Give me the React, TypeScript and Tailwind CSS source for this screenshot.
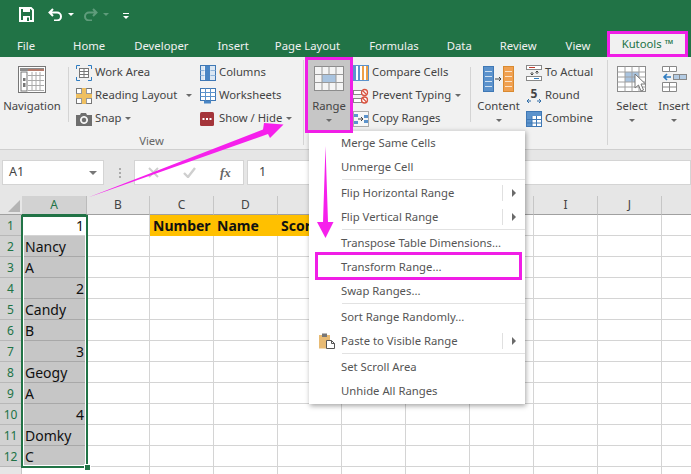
import React from "react";

const font = "font-['Noto_Sans','Open_Sans',sans-serif]";

const Caret = ({ className = "" }: { className?: string }) => (
  <span className={`inline-block h-0 w-0 border-x-[3px] border-t-[3px] border-x-transparent border-t-[#6a6a6a] ${className}`} />
);

const NavigationIcon = () => (
  <svg width="28" height="27" viewBox="0 0 28 27">
    <rect x="0.5" y="0.5" width="27" height="26" fill="#fff" stroke="#777" />
    <rect x="2" y="2" width="24" height="3" fill="#8c8c8c" />
    <line x1="10" y1="4" x2="26" y2="4" stroke="#d9694a" />
    <rect x="3" y="6" width="6" height="19" fill="#fff" stroke="#777" />
    <rect x="5" y="12" width="2.5" height="3" fill="#777" />
    <rect x="5" y="17" width="2.5" height="4" fill="#777" />
    {[10, 15, 20, 25].map((y) => <line key={y} x1="10" y1={y - 0.5} x2="26" y2={y - 0.5} stroke="#aaa" />)}
    {[14, 18, 22].map((x) => <line key={x} x1={x} y1="6" x2={x} y2="25" stroke="#aaa" />)}
  </svg>
);

const WorkAreaIcon = () => (
  <svg width="16" height="16" viewBox="0 0 16 16">
    <path d="M.5 4V.5H4M12 .5h3.500V4M15.500 12v3.500H12M4 15.500H.5V12" fill="none" stroke="#2f7cc1" />
    <rect x="3.500" y="3.500" width="9" height="9" fill="#fff" stroke="#777" />
    <path d="M3.500 6.500h9M3.500 9.500h9M8 3.500v9" stroke="#777" />
  </svg>
);

const ReadingIcon = () => (
  <svg width="16" height="16" viewBox="0 0 16 16">
    <rect x="0.5" y="0.5" width="15" height="15" fill="#fff" stroke="#777" />
    <path d="M.5 5.500h15M.5 10.500h15M5.500 .5v15M10.500 .5v15" stroke="#999" />
    <path d="M0 8h16M8 0v16" stroke="#f0c060" strokeWidth="4" />
  </svg>
);

const SnapIcon = () => (
  <svg width="16" height="14" viewBox="0 0 16 14">
    <path d="M0 3h4l1-2h5l1 2h5v11H0z" fill="#6e6e6e" />
    <circle cx="8" cy="8" r="3.500" fill="#e8e8e8" stroke="#fff" />
    <circle cx="8" cy="8" r="2.200" fill="#6e6e6e" />
  </svg>
);

const ColumnsIcon = () => (
  <svg width="16" height="16" viewBox="0 0 16 16">
    <rect x="0.5" y="0.5" width="15" height="15" fill="#fff" stroke="#3f78b5" />
    <rect x="1" y="1" width="3.500" height="14" fill="#dbe7f3" />
    <rect x="5" y="1" width="5" height="14" fill="#4a86c5" />
    <rect x="10" y="1" width="5" height="14" fill="#dbe7f3" />
    <path d="M10.500 5.500h5M10.500 10.500h5M.5 5.500h4M.5 10.500h4" stroke="#8fb4da" />
  </svg>
);

const WorksheetsIcon = () => (
  <svg width="16" height="16" viewBox="0 0 16 16">
    <rect x="0.5" y="0.5" width="15" height="12" fill="#fff" stroke="#3f78b5" />
    <path d="M.5 4.500h15M.5 8.500h15M5.500 .5v12M10.500 .5v12" stroke="#5c93cc" />
    <rect x="4" y="13" width="7" height="2.500" fill="#4a86c5" />
  </svg>
);

const ShowHideIcon = () => (
  <svg width="14" height="14" viewBox="0 0 14 14">
    <rect width="14" height="14" rx="1.500" fill="#a4343a" />
    <rect x="2.500" y="6" width="2" height="2" fill="#fff" />
    <rect x="6" y="6" width="2" height="2" fill="#fff" />
    <rect x="9.500" y="6" width="2" height="2" fill="#fff" />
  </svg>
);

const RangeIcon = () => (
  <svg width="30" height="25" viewBox="0 0 30 25">
    <rect x="0.5" y="0.5" width="29" height="24" fill="#f4f4f4" stroke="#8c8c8c" />
    <rect x="8" y="9" width="14" height="8" fill="#a9c4e0" />
    <path d="M.5 8.500h29M.5 16.500h29M8 .5v24M15 .5v8M15 17v7.500M22 .5v24" stroke="#9a9a9a" />
  </svg>
);

const CompareIcon = () => (
  <svg width="16" height="16" viewBox="0 0 16 16">
    <rect x="0.5" y="0.5" width="15" height="15" fill="#fff" stroke="#5c93cc" />
    <rect x="1" y="1" width="2" height="14" fill="#5c93cc" />
    <rect x="5" y="1" width="2" height="14" fill="#5c93cc" />
    <rect x="9" y="1" width="2" height="14" fill="#eea048" />
    <rect x="13" y="1" width="2" height="14" fill="#eea048" />
  </svg>
);

const PreventIcon = () => (
  <svg width="16" height="16" viewBox="0 0 16 16">
    <rect x="0.500" y="2.500" width="8" height="4" fill="#fff" stroke="#888" />
    <rect x="0.500" y="10.500" width="8" height="4" fill="#fff" stroke="#888" />
    <circle cx="11.500" cy="4.500" r="3" fill="#fff" stroke="#d9533f" strokeWidth="1.300" />
    <path d="M9.500 2.500l4 4" stroke="#d9533f" strokeWidth="1.300" />
    <circle cx="11.500" cy="12" r="3" fill="#fff" stroke="#d9533f" strokeWidth="1.300" />
    <path d="M9.500 10l4 4" stroke="#d9533f" strokeWidth="1.300" />
  </svg>
);

const CopyRangesIcon = () => (
  <svg width="16" height="16" viewBox="0 0 16 16">
    <rect x="0.5" y="0.5" width="15" height="15" fill="#f7f7f7" stroke="#aaa" />
    <rect x="1" y="3" width="4" height="3" fill="#5c93cc" />
    <rect x="1" y="10" width="4" height="3" fill="#5c93cc" />
    <rect x="11" y="4" width="4" height="3" fill="#5c93cc" />
    <rect x="11" y="9" width="4" height="3" fill="#5c93cc" />
    <path d="M5 8h5M8 6l2 2-2 2" fill="none" stroke="#444" />
  </svg>
);

const ContentIcon = () => (
  <svg width="31" height="26" viewBox="0 0 31 26">
    <rect x="0.500" y="0.500" width="10" height="25" fill="#5b92cc" stroke="#3f78b5" />
    {[5.5, 10.5, 15.5, 20.5].map((y) => <line key={y} x1="2" y1={y} x2="9" y2={y} stroke="#cfe0f0" />)}
    <rect x="20.500" y="0.500" width="10" height="25" fill="#f0a050" stroke="#d98a30" />
    {[5.5, 10.5, 15.5, 20.5].map((y) => <line key={y} x1="22" y1={y} x2="29" y2={y} stroke="#fbe3c8" />)}
    <path d="M12 13h6M16 11l2 2-2 2" fill="none" stroke="#444" />
  </svg>
);

const ToActualIcon = () => (
  <svg width="16" height="16" viewBox="0 0 16 16">
    <rect x="0.500" y="0.500" width="15" height="4" fill="#fff" stroke="#888" />
    <line x1="3" y1="2.500" x2="9" y2="2.500" stroke="#c0392b" />
    <rect x="0.500" y="11.500" width="15" height="4" fill="#fff" stroke="#888" />
    <line x1="8" y1="13.500" x2="13" y2="13.500" stroke="#2f7cc1" />
    <path d="M11 9V6M9.500 7.500L11 6l1.500 1.500M6 7v3M4.500 8.500L6 10l1.500-1.500" fill="none" stroke="#444" />
  </svg>
);

const RoundIcon = () => (
  <div className="relative flex h-[17px] w-[16px] justify-center">
    <span className="text-[12px] font-bold leading-[13px] text-[#444]">5</span>
    <svg className="absolute left-0 top-[10px]" width="16" height="7" viewBox="0 0 16 7">
      <path d="M1 4h4M3 2L1 4l2 2M15 4h-4M13 2l2 2-2 2" fill="none" stroke="#2f6da8" />
    </svg>
  </div>
);

const CombineIcon = () => (
  <svg width="16" height="16" viewBox="0 0 16 16">
    <rect x="0.500" y="0.500" width="15" height="15" fill="#fff" stroke="#3f78b5" />
    <rect x="1" y="1" width="14" height="4" fill="#5c93cc" />
    <rect x="1" y="5" width="5" height="10" fill="#5c93cc" />
    <path d="M6 5v10M10.500 5v10M6 8.500h9M6 12h9M1 8.500h5M1 12h5" stroke="#3f78b5" />
  </svg>
);

const SelectIcon = () => (
  <svg width="30" height="27" viewBox="0 0 30 27">
    <rect x="0.500" y="0.500" width="28" height="25" fill="#fff" stroke="#8c8c8c" />
    <rect x="8" y="6" width="14" height="10" fill="#a9c4e0" />
    <path d="M.5 6h28M.5 11h28M.5 16h28M.5 21h28M8 .5v25M15 .5v25M22 .5v25" stroke="#a0a0a0" />
    <path d="M18 8v14l3.500-3 2.500 6 2.500-1-2.500-6h4.500z" fill="#fff" stroke="#777" />
  </svg>
);

const InsertIcon = () => (
  <svg width="28" height="27" viewBox="0 0 28 27">
    <path d="M2.500.5h7v5h-7zM9.500.5h7v5h-7z" fill="#fff" stroke="#888" />
    <rect x="13.500" y="8.500" width="6" height="5" fill="#b3cbe3" stroke="#888" />
    <rect x="19.500" y="8.500" width="7" height="5" fill="#b3cbe3" stroke="#888" />
    <path d="M11 11H4M7 8l-3 3 3 3" fill="none" stroke="#2f7cc1" strokeWidth="1.600" />
    <path d="M2.500 16.500h14v9h-14zM2.500 21h14M9.500 16.500v9" fill="#fff" stroke="#888" />
  </svg>
);

const PasteIcon = () => (
  <svg width="16" height="16" viewBox="0 0 16 16">
    <rect x="0" y="2" width="11" height="13.500" fill="#e8bb74" />
    <rect x="3" y="0.500" width="5" height="3.500" fill="#777" />
    <path d="M7.500 7.500h5l3 3v5h-8z" fill="#fff" stroke="#555" />
    <path d="M12.500 7.500v3h3" fill="none" stroke="#555" />
  </svg>
);

const SmallBtn = ({ icon, label, caret }: { icon: React.ReactNode; label: string; caret?: "near" | "far" }) => (
  <div className="flex h-[23px] items-center">
    <div className="flex w-[19px] shrink-0 justify-start">{icon}</div>
    <span className="whitespace-nowrap">{label}</span>
    {caret && <Caret className={caret === "far" ? "ml-[9px]" : "ml-[4px]"} />}
  </div>
);

const LargeBtn = ({ icon, label, caret, className = "" }: { icon: React.ReactNode; label: string; caret?: boolean; className?: string }) => (
  <div className={`flex shrink-0 flex-col items-center pt-[9px] ${className}`}>
    <div className="flex h-[27px] items-start justify-center">{icon}</div>
    <span className="mt-[4px] h-[17px] whitespace-nowrap leading-[17px]">{label}</span>
    {caret && <Caret className="mt-[5px]" />}
  </div>
);

const RibbonSep = ({ className = "" }: { className?: string }) => (
  <div className={`mt-[10px] h-[55px] w-px shrink-0 bg-[#d4d4d4] ${className}`} />
);

const tabs = [
  { name: "File", ml: "ml-[17px]" },
  { name: "Home", ml: "ml-[38px]" },
  { name: "Developer", ml: "ml-[29px]" },
  { name: "Insert", ml: "ml-[29px]" },
  { name: "Page Layout", ml: "ml-[26px]" },
  { name: "Formulas", ml: "ml-[29px]" },
  { name: "Data", ml: "ml-[28px]" },
  { name: "Review", ml: "ml-[28px]" },
  { name: "View", ml: "ml-[29px]" },
];

const MenuItem = ({ label, sub, icon }: { label: string; sub?: boolean; icon?: React.ReactNode }) => (
  <div className="flex h-[24px] items-center">
    <div className="flex w-[32px] shrink-0 justify-center pl-[4px]">{icon}</div>
    <span className="flex-1 whitespace-nowrap">{label}</span>
    {sub && (
      <div className="flex h-[16px] w-[23px] shrink-0 items-center border-l border-[#e0e0e0] pl-[9px]">
        <span className="h-0 w-0 border-y-[4px] border-l-[4px] border-y-transparent border-l-[#6a6a6a]" />
      </div>
    )}
  </div>
);

const MenuSep = () => <div className="ml-[33px] h-[2px] border-t border-[#e2e2e2]" />;

const headerCols = ["A", "B", "C", "D", "", "", "", "", "I", "J", ""];
const colWidths = ["w-[65px]", "w-[63px]", "w-[64px]", "w-[64px]", "w-[64px]", "w-[64px]", "w-[64px]", "w-[64px]", "w-[64px]", "w-[64px]", "w-[64px]"];
const colA: [string, boolean][] = [
  ["1", true], ["Nancy", false], ["A", false], ["2", true], ["Candy", false], ["B", false],
  ["3", true], ["Geogy", false], ["A", false], ["4", true], ["Domky", false], ["C", false],
];
const firstRow = ["", "Number", "Name", "Score", "", "", "", "", "", ""];

export default function App() {
  return (
    <div className={`relative flex h-[474px] w-[691px] flex-col overflow-hidden bg-white text-[11.3px] text-[#444] ${font}`}>
      {/* title bar */}
      <div className="flex h-[35px] items-center bg-[#217346] pb-[6px] pl-[19px]">
        <svg width="15" height="15" viewBox="0 0 15 15">
          <path d="M1 1h11l2 2v11H1z" fill="none" stroke="#fff" strokeWidth="2" />
          <rect x="4" y="1" width="7" height="4" fill="#fff" />
          <rect x="4" y="9" width="7" height="5" fill="#fff" />
          <rect x="8" y="10.500" width="2" height="3.500" fill="#217346" />
        </svg>
        <svg className="ml-[14px]" width="15" height="13" viewBox="0 0 15 13">
          <path d="M5 1L1.500 4.500 5 8M2 4.500h7a4 4 0 0 1 0 8H6" fill="none" stroke="#fff" strokeWidth="2" />
        </svg>
        <span className="ml-[5px] h-0 w-0 border-x-[3px] border-t-[3px] border-x-transparent border-t-white" />
        <svg className="ml-[9px]" width="15" height="13" viewBox="0 0 15 13">
          <path d="M10 1l3.500 3.500L10 8M13 4.500H6a4 4 0 0 0 0 8h3" fill="none" stroke="#5f9c7b" strokeWidth="2" />
        </svg>
        <span className="ml-[5px] h-0 w-0 border-x-[3px] border-t-[3px] border-x-transparent border-t-[#5f9c7b]" />
        <div className="ml-[14px] flex flex-col items-center gap-[2px] pt-[3px]">
          <span className="h-px w-[6px] bg-white" />
          <span className="h-0 w-0 border-x-[3px] border-t-[3px] border-x-transparent border-t-white" />
        </div>
      </div>

      {/* tabs */}
      <div className="relative flex h-[22px] items-center bg-[#217346] text-[#f1f1f1]">
        {tabs.map((t) => (
          <span key={t.name} className={`whitespace-nowrap ${t.ml}`}>{t.name}</span>
        ))}
        <div className="absolute left-[607px] top-[-4px] flex h-[26px] w-[81px] items-center justify-center whitespace-nowrap border-[3px] border-[#f01ee6] bg-[#f1f1f1] text-[#217346]">
          Kutools ™
        </div>
      </div>

      {/* ribbon */}
      <div className="flex h-[93px] border-b border-[#cfcfcf] bg-[#f1f1f1]">
        <div className="flex h-full w-[303px] shrink-0 flex-col">
          <div className="flex h-[75px]">
            <LargeBtn icon={<NavigationIcon />} label="Navigation" className="w-[64px]" />
            <RibbonSep className="ml-[4px]" />
            <div className="ml-[7px] flex w-[124px] flex-col pt-[4px]">
              <SmallBtn icon={<WorkAreaIcon />} label="Work Area" />
              <SmallBtn icon={<ReadingIcon />} label="Reading Layout" caret="far" />
              <SmallBtn icon={<SnapIcon />} label="Snap" caret="near" />
            </div>
            <div className="flex flex-col pt-[4px]">
              <SmallBtn icon={<ColumnsIcon />} label="Columns" />
              <SmallBtn icon={<WorksheetsIcon />} label="Worksheets" />
              <SmallBtn icon={<ShowHideIcon />} label="Show / Hide" caret="near" />
            </div>
          </div>
          <div className="text-center leading-[17px] text-[#666]">View</div>
        </div>
        <div className="mt-[3px] h-[85px] w-px shrink-0 bg-[#d4d4d4]" />
        <div className="flex w-[303px] shrink-0">
          <div className="relative z-30 ml-[1px] h-[76px] w-[48px] shrink-0 border-[3px] border-[#f01ee6] bg-[#c6c6c6]">
            <LargeBtn icon={<RangeIcon />} label="Range" caret className="-mt-[3px]" />
          </div>
          <div className="flex w-[117px] shrink-0 flex-col pt-[4px]">
            <SmallBtn icon={<CompareIcon />} label="Compare Cells" />
            <SmallBtn icon={<PreventIcon />} label="Prevent Typing" caret="near" />
            <SmallBtn icon={<CopyRangesIcon />} label="Copy Ranges" />
          </div>
          <RibbonSep />
          <LargeBtn icon={<ContentIcon />} label="Content" caret className="w-[55px]" />
          <div className="flex flex-col pt-[4px]">
            <SmallBtn icon={<ToActualIcon />} label="To Actual" />
            <SmallBtn icon={<RoundIcon />} label="Round" />
            <SmallBtn icon={<CombineIcon />} label="Combine" />
          </div>
        </div>
        <div className="mt-[3px] h-[85px] w-px shrink-0 bg-[#d4d4d4]" />
        <div className="flex">
          <LargeBtn icon={<SelectIcon />} label="Select" caret className="ml-[9px] w-[30px]" />
          <LargeBtn icon={<InsertIcon />} label="Insert" caret className="ml-[12px] w-[30px]" />
        </div>
      </div>

      {/* formula bar */}
      <div className="flex h-[46px] items-start bg-[#e6e6e6] pt-[10px] text-[12.500px]">
        <div className="ml-[2px] flex h-[25px] w-[102px] items-center justify-between border border-[#d4d4d4] bg-white pl-[6px] pr-[6px] text-[#444]">
          A1
          <span className="h-0 w-0 border-x-[4px] border-t-[4px] border-x-transparent border-t-[#777]" />
        </div>
        <div className="ml-[12px] flex h-[25px] w-[8px] flex-col items-center justify-center gap-[2px]">
          <span className="h-[2px] w-[2px] bg-[#aaa]" />
          <span className="h-[2px] w-[2px] bg-[#aaa]" />
          <span className="h-[2px] w-[2px] bg-[#aaa]" />
        </div>
        <div className="ml-[10px] flex h-[25px] w-[110px] items-center border border-[#d4d4d4] bg-white text-[#c8c8c8]">
          <svg className="ml-[13px]" width="11" height="11" viewBox="0 0 11 11">
            <path d="M1 1l9 9M10 1l-9 9" stroke="#cfcfcf" strokeWidth="2" />
          </svg>
          <svg className="ml-[24px]" width="13" height="11" viewBox="0 0 13 11">
            <path d="M1 6l4 4 7-9" fill="none" stroke="#cfcfcf" strokeWidth="2.400" />
          </svg>
          <span className="ml-[24px] font-['Liberation_Serif',serif] text-[13px] italic font-bold text-[#666]">fx</span>
        </div>
        <div className="ml-[3px] flex h-[25px] flex-1 items-center border border-[#d4d4d4] bg-white pl-[11px]">1</div>
      </div>

      {/* sheet */}
      <div className="relative flex-1 overflow-hidden text-[14px] text-[#111]">
        <div className="flex h-[19px] bg-[#e6e6e6]">
          <div className="relative h-[19px] w-[22px] shrink-0 border-b border-[#a0a0a0]">
            <span className="absolute bottom-[2px] right-[2px] h-0 w-0 border-b-[12px] border-l-[12px] border-b-[#b4b4b4] border-l-transparent" />
          </div>
          {headerCols.map((c, i) => (
            <div
              key={i}
              className={`flex shrink-0 items-center justify-center border-b border-r text-[12px] ${colWidths[i]} ${
                i === 0 ? "border-b-[#217346] border-r-[#bbb] bg-[#d2d2d2] text-[#217346]" : "border-b-[#a0a0a0] border-r-[#c6c6c6] text-[#444]"
              }`}
            >
              {c}
            </div>
          ))}
        </div>
        {Array.from({ length: 13 }, (_, r) => {
          const a = colA[r];
          return (
            <div key={r} className="flex h-[21px]">
              <div
                className={`flex w-[22px] shrink-0 items-center justify-center border-b border-r pt-[1px] text-[12px] ${
                  a ? "border-b-[#b8b8b8] border-r-[#217346] bg-[#d2d2d2] text-[#217346]" : "border-[#c6c6c6] bg-[#e6e6e6]"
                }`}
              >
                {a ? r + 1 : ""}
              </div>
              <div
                className={`flex shrink-0 items-center overflow-hidden border-b px-[2px] pt-[1px] ${colWidths[0]} ${
                  a && a[1] ? "justify-end" : ""
                } ${a && r > 0 ? "border-[#a8a8a8] bg-[#c6c6c6]" : "border-[#d4d4d4]"}`}
              >
                {a && <span className="px-[1px]">{a[0]}</span>}
              </div>
              {firstRow.map((label, i) => {
                const filled = r === 0 && i >= 1 && i <= 3;
                return (
                  <div
                    key={i}
                    className={`flex shrink-0 items-center overflow-hidden whitespace-nowrap border-b pl-[3px] pt-[1px] font-bold ${colWidths[i + 1]} ${
                      filled ? "border-[#ffc000] bg-[#ffc000]" : "border-r border-[#d4d4d4]"
                    }`}
                  >
                    {r === 0 ? label : ""}
                  </div>
                );
              })}
            </div>
          );
        })}

        {/* selection outline on column A */}
        <div className="absolute left-[21px] top-[19px] h-[253px] w-[67px] border-2 border-[#217346]">
          <div className="h-full w-full border border-white" />
        </div>
        <div className="absolute left-[84px] top-[268px] h-[7px] w-[7px] border border-white bg-[#217346]" />
      </div>

      {/* Range dropdown */}
      <div className="absolute left-[309px] top-[130px] z-20 w-[216px] border-t border-[#dcdcdc] bg-white pb-[1px] text-[#555] shadow-[1px_2px_5px_rgba(0,0,0,0.35)]">
        <MenuItem label="Merge Same Cells" />
        <MenuItem label="Unmerge Cell" />
        <MenuSep />
        <MenuItem label="Flip Horizontal Range" sub />
        <MenuItem label="Flip Vertical Range" sub />
        <MenuSep />
        <MenuItem label="Transpose Table Dimensions..." />
        <MenuItem label="Transform Range..." />
        <MenuItem label="Swap Ranges..." />
        <MenuSep />
        <MenuItem label="Sort Range Randomly..." />
        <MenuItem label="Paste to Visible Range" sub icon={<PasteIcon />} />
        <MenuSep />
        <MenuItem label="Set Scroll Area" />
        <MenuItem label="Unhide All Ranges" />
      </div>

      {/* magenta callouts */}
      <div className="absolute left-[315px] top-[252px] z-30 h-[28px] w-[207px] border-[3px] border-[#f01ee6]" />
      <svg className="pointer-events-none absolute left-0 top-0 z-40" width="691" height="474" viewBox="0 0 691 474">
        <path d="M88 197.500L263 129.500 264 123 283.500 124.500 270 138 268 134z" fill="#f620ec" />
        <path d="M325.500 146L328 222H333.500L325.500 238 317 222H323z" fill="#f620ec" />
      </svg>
    </div>
  );
}
